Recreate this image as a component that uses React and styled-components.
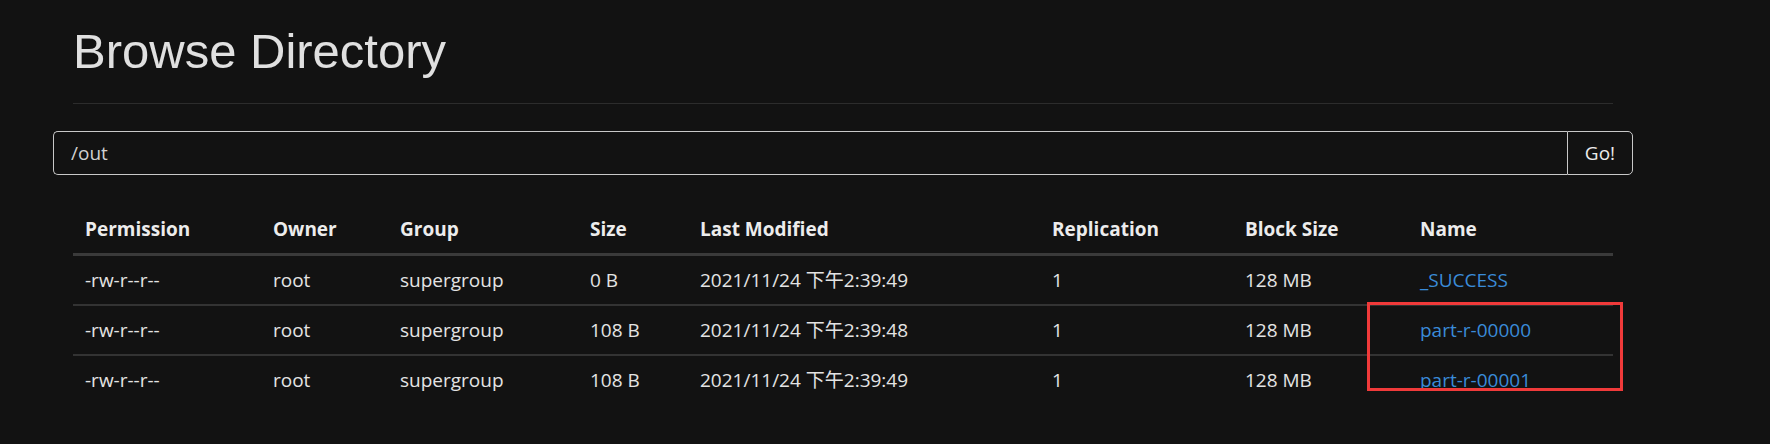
import styled, { createGlobalStyle } from 'styled-components';

const GlobalStyle = createGlobalStyle`
  html, body {
    margin: 0;
    padding: 0;
    background: #121212;
  }
  body {
    font-family: 'Open Sans', 'Noto Sans CJK SC', sans-serif;
    color: #e4e4e4;
  }
`;

const Page = styled.div`
  padding: 24px 0 0 73px;
  width: 1540px;
`;

const Title = styled.h1`
  margin: 0;
  font-family: 'Liberation Sans', Arial, sans-serif;
  font-size: 49px;
  line-height: 54px;
  font-weight: 400;
  color: #e0e0e0;
`;

const Rule = styled.hr`
  margin: 25px 0 0;
  border: none;
  height: 1px;
  background: #2c2c2c;
`;

const PathForm = styled.form`
  display: flex;
  margin: 27px -20px 0;
  height: 44px;
`;

const PathInput = styled.input`
  flex: 1;
  box-sizing: border-box;
  height: 100%;
  padding: 0 17px;
  background: transparent;
  border: 1px solid #c8c8c8;
  border-right: none;
  border-radius: 5px 0 0 5px;
  color: #d0d0d0;
  font-family: 'Open Sans', sans-serif;
  font-size: 19px;
  outline: none;
`;

const GoButton = styled.button`
  box-sizing: border-box;
  width: 66px;
  height: 100%;
  background: transparent;
  border: 1px solid #c8c8c8;
  border-radius: 0 5px 5px 0;
  color: #ececec;
  font-family: 'Open Sans', sans-serif;
  font-size: 19px;
  padding: 0;
`;

const TableWrap = styled.div`
  position: relative;
  margin-top: 30px;
`;

const Table = styled.table`
  width: 1540px;
  table-layout: fixed;
  border-collapse: separate;
  border-spacing: 0;
  font-size: 19px;
`;

const Th = styled.th`
  box-sizing: border-box;
  width: ${p => p.$w}px;
  text-align: left;
  font-weight: 700;
  color: #ececec;
  padding: 12px;
  line-height: 24px;
  border-bottom: 3px solid #3a3a3a;
  white-space: nowrap;
`;

const Row = styled.tr`
  & + & td {
    border-top: 2px solid #333333;
  }
`;

const Td = styled.td`
  padding: 12px;
  line-height: 24px;
  color: #e4e4e4;
  white-space: nowrap;
`;

const FileLink = styled.a`
  color: #3a8bd8;
  text-decoration: none;
`;

const Highlight = styled.div`
  position: absolute;
  left: 1294px;
  top: 97px;
  width: 256px;
  height: 89px;
  box-sizing: border-box;
  border: 3px solid #f03a3a;
  pointer-events: none;
`;

const columns = [
  ['Permission', 188],
  ['Owner', 127],
  ['Group', 190],
  ['Size', 110],
  ['Last Modified', 352],
  ['Replication', 193],
  ['Block Size', 175],
  ['Name', 205],
];

const files = [
  { size: '0 B', modified: '2021/11/24 下午2:39:49', name: '_SUCCESS' },
  { size: '108 B', modified: '2021/11/24 下午2:39:48', name: 'part-r-00000' },
  { size: '108 B', modified: '2021/11/24 下午2:39:49', name: 'part-r-00001' },
];

const App = () => {
  return (
    <>
      <GlobalStyle />
      <Page>
        <Title>Browse Directory</Title>
        <Rule />
        <PathForm onSubmit={e => e.preventDefault()}>
          <PathInput defaultValue="/out" />
          <GoButton type="submit">Go!</GoButton>
        </PathForm>

        <TableWrap>
          <Table>
            <thead>
              <tr>
                {columns.map(([label, w]) => (
                  <Th key={label} $w={w}>{label}</Th>
                ))}
              </tr>
            </thead>
            <tbody>
              {files.map(f => (
                <Row key={f.name}>
                  <Td>-rw-r--r--</Td>
                  <Td>root</Td>
                  <Td>supergroup</Td>
                  <Td>{f.size}</Td>
                  <Td>{f.modified}</Td>
                  <Td>1</Td>
                  <Td>128 MB</Td>
                  <Td><FileLink href="#">{f.name}</FileLink></Td>
                </Row>
              ))}
            </tbody>
          </Table>
          {/* annotation box around the part files */}
          <Highlight />
        </TableWrap>
      </Page>
    </>
  );
};

export default App;
